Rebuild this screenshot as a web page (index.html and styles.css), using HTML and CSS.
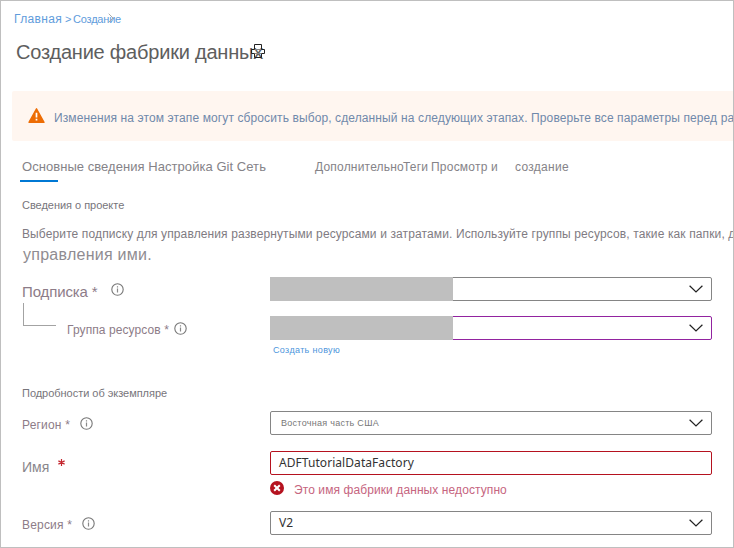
FILE: index.html
```html
<!DOCTYPE html>
<html lang="ru">
<head>
<meta charset="utf-8">
<title>Создание фабрики данных</title>
<link rel="stylesheet" href="styles.css">
</head>
<body>
<svg class="defs" width="0" height="0">
  <symbol id="info" viewBox="0 0 13 13"><circle cx="6.5" cy="6.5" r="5.7" fill="none" stroke="#777" stroke-width="1.1"/><path d="M6.5 5.5V9.6M6.5 3.3V4.5" stroke="#888" stroke-width="1.2"/></symbol>
  <symbol id="chevron" viewBox="0 0 14 8"><path d="M.6 .7 7 7 13.4 .7" fill="none" stroke="#222" stroke-width="1.2"/></symbol>
</svg>
<main class="frame">
  <nav class="crumbs"><a class="home">Главная</a><span class="sep">&gt;</span><a class="current">Создание<svg class="crumb-arrow" viewBox="0 0 6 10"><path d="M.7 .7 5 5 .7 9.3" fill="none" stroke="#aaa"/></svg></a></nav>
  <header class="title"><h1>Создание фабрики данных</h1><svg class="print" viewBox="0 0 14 14"><path d="M3.5 5.5V.5H10.5V5.5H13.5V9.5H10.5V13.5H3.5V9.5H.5V5.5Z" fill="none" stroke="#222"/><path d="M4 5.5H10M4 9.5H10" fill="none" stroke="#888"/></svg></header>
  <section class="banner">
    <svg class="warn" viewBox="0 0 17 16"><path d="M8.5 .8 16 14.3H1Z" fill="#ed6d05" stroke="#ed6d05" stroke-width="1.4" stroke-linejoin="round"/><path d="M8.5 4.8V9.6M8.5 10.8V12.6" stroke="#fff" stroke-width="1.7"/></svg>
    <p>Изменения на этом этапе могут сбросить выбор, сделанный на следующих этапах. Проверьте все параметры перед ра</p>
  </section>
  <div class="tabs">
    <span class="tab main">Основные сведения Настройка Git Сеть</span>
    <span class="tab extra">Дополнительно</span><span class="tab tags">Теги</span>
    <span class="tab review">Просмотр и</span><span class="tab create">создание</span>
  </div>
  <h2 class="project">Сведения о проекте</h2>
  <p class="desc">Выберите подписку для управления развернутыми ресурсами и затратами. Используйте группы ресурсов, такие как папки, д</p>
  <p class="desc-more">управления ими.</p>

  <div class="row subscription">
    <label><span>Подписка *</span><svg class="info"><use href="#info"/></svg></label>
    <div class="select"><i class="mask"></i><svg class="chevron"><use href="#chevron"/></svg></div>
  </div>
  <div class="row group">
    <i class="branch"></i>
    <label><span>Группа ресурсов *</span><svg class="info"><use href="#info"/></svg></label>
    <div class="select purple"><i class="mask"></i><svg class="chevron"><use href="#chevron"/></svg></div>
  </div>
  <a class="new">Создать новую</a>

  <h2 class="instance">Подробности об экземпляре</h2>
  <div class="row region">
    <label><span>Регион *</span><svg class="info"><use href="#info"/></svg></label>
    <div class="select"><span class="value small">Восточная часть США</span><svg class="chevron"><use href="#chevron"/></svg></div>
  </div>
  <div class="row name">
    <label><span>Имя</span><svg class="star" viewBox="0 0 7 7"><path d="M3.5 0V7M.4 1.9 6.6 5.1M.4 5.1 6.6 1.9" stroke="#c4262e" stroke-width="1.2"/></svg></label>
    <div class="select invalid"><span class="value">ADFTutorialDataFactory</span></div>
  </div>
  <div class="error">
    <svg class="cross" viewBox="0 0 14 14"><circle cx="7" cy="7" r="7" fill="#b5121f"/><path d="M4.2 4.2 9.8 9.8M9.8 4.2 4.2 9.8" stroke="#fff" stroke-width="2"/></svg>
    <span>Это имя фабрики данных недоступно</span>
  </div>
  <div class="row version">
    <label><span>Версия *</span><svg class="info"><use href="#info"/></svg></label>
    <div class="select"><span class="value">V2</span><svg class="chevron"><use href="#chevron"/></svg></div>
  </div>
</main>
</body>
</html>
```
FILE: styles.css
```css
* { box-sizing: border-box; }
body { margin: 0; font-family: "Liberation Sans", Arial, sans-serif; font-size: 12px; color: #807b82; background: #fff; }
h1, h2, p { margin: 0; font-weight: 400; white-space: nowrap; }
svg { flex: none; display: block; }
.defs { position: absolute; }
.frame { width: 734px; height: 548px; border: 1px solid #bfbfbf; overflow: hidden; }

.crumbs { display: flex; height: 16px; margin: 10px 0 0 13px; line-height: 16px; color: #609cdc; }
.home { width: 51px; letter-spacing: .33px; }
.sep { width: 8px; font-size: 11px; }
.current { position: relative; font-size: 11px; letter-spacing: -.2px; }
.crumb-arrow { position: absolute; left: 35px; top: 2px; width: 6px; height: 10px; }

.title { display: flex; height: 24px; margin: 13px 0 0 15px; color: #5e5e5e; }
h1 { width: 235px; font-size: 20px; line-height: 24px; letter-spacing: -.21px; }
.print { width: 14px; height: 14px; margin-top: 4px; }

.banner { display: flex; height: 50px; margin: 27px 0 0 11px; padding-left: 16px; background: #fff6f0; border-radius: 2px 0 0 2px; color: #7089ab; }
.warn { width: 17px; height: 16px; margin: 17px 9px 0 0; }
.banner p { font-size: 12px; line-height: 16px; padding-top: 19px; letter-spacing: .11px; }

.tabs { position: relative; display: flex; height: 24px; margin: 17px 0 0 19px; padding-left: 2px; font-size: 12px; line-height: 18px; color: #858388; white-space: nowrap; }
.tabs::after { content: ""; position: absolute; left: 0; bottom: 0; width: 38px; height: 2px; background: #0078d4; }
.main { width: 293px; font-size: 13px; line-height: 17px; letter-spacing: .05px; }
.extra { width: 88px; letter-spacing: .2px; }
.tags { width: 28px; letter-spacing: .15px; }
.review { width: 84px; letter-spacing: .22px; }
.create { letter-spacing: .3px; }

.project, .instance { font-size: 11px; line-height: 14px; margin-left: 21px; letter-spacing: -.03px; color: #77757b; }
.project { margin-top: 16px; }
.desc { margin: 14px 0 0 21px; line-height: 16px; letter-spacing: .12px; }
.desc-more { margin: 3px 0 0 22px; font-size: 16px; line-height: 20px; letter-spacing: .26px; color: #8f8c91; }

.row { display: flex; justify-content: space-between; height: 24px; padding-right: 21px; }
.row label { display: flex; padding-left: 21px; line-height: 16px; color: #8d7c88; white-space: nowrap; }
.row label span { padding-top: 6px; letter-spacing: .18px; }
.info { width: 13px; height: 13px; margin-top: 6px; }
.subscription { margin-top: 12px; }
.subscription label span { width: 89px; padding-top: 7px; font-size: 15px; letter-spacing: -.12px; }
.group { margin-top: 15px; position: relative; }
.branch { position: absolute; left: 22px; top: -13px; width: 33px; height: 23px; border: solid #a3a3a3; border-width: 0 0 1px 1px; }
.group label { padding-left: 66px; }
.group label span { width: 107px; letter-spacing: .09px; }
.region { margin-top: 11px; }
.region label span { width: 58px; }
.version label span { width: 60px; }
.name { margin-top: 16px; }
.name label span { width: 36px; padding-top: 8px; font-size: 14px; letter-spacing: 0; color: #8a868c; }
.star { width: 7px; height: 7px; margin-top: 8px; }

.select { display: flex; align-items: center; width: 442px; height: 24px; border: 1px solid #858585; border-radius: 2px; }
.purple { border-color: #9223a0; }
.invalid { border-color: #b5121f; }
.mask { width: 183px; height: 24px; margin-left: -1px; background: #bfbfbf; flex: none; }
.chevron { width: 14px; height: 8px; margin: 0 8px 0 auto; }
.value { padding-left: 8px; font: 12px/20px "Noto Sans", "Open Sans", sans-serif; letter-spacing: .06px; color: #333; }
.small { padding: 0 0 0 10px; font: 9px/20px "Liberation Sans", sans-serif; letter-spacing: .28px; color: #777; }

.new { display: block; margin: 4px 0 0 272px; font-size: 9px; line-height: 12px; letter-spacing: .35px; color: #4d95dc; }
.instance { margin-top: 30px; }
.error { display: flex; height: 14px; margin: 6px 0 0 269px; line-height: 16px; color: #c66580; }
.cross { width: 14px; height: 14px; margin-right: 10px; }
.error span { padding-top: 1px; letter-spacing: .09px; }
.version { margin-top: 16px; }
```
